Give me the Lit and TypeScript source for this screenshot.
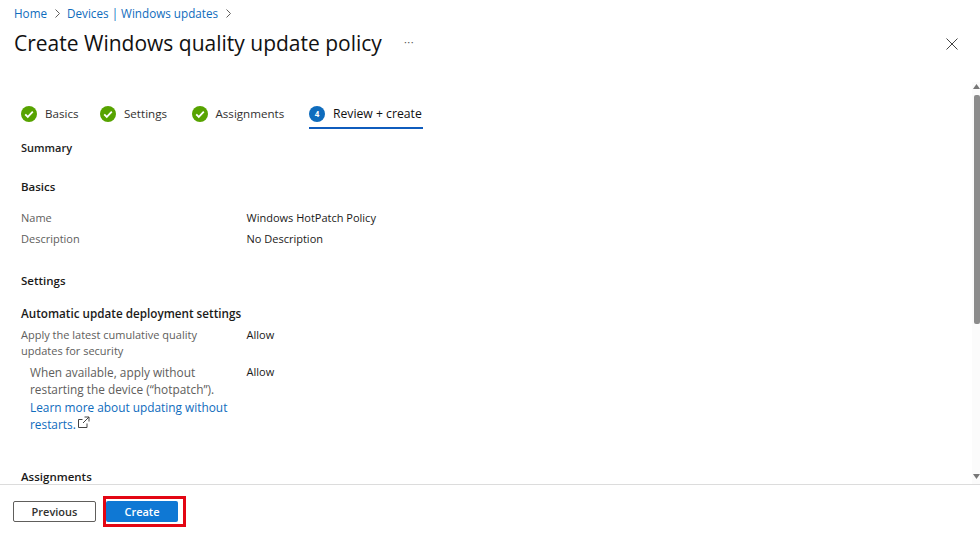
import { LitElement, html, css } from 'lit';
import { customElement } from 'lit/decorators.js';

const steps = [
	{ label: 'Basics', width: 79 },
	{ label: 'Settings', width: 91.5 },
	{ label: 'Assignments', width: 117.5 },
];

@customElement('app-root')
export class AppRoot extends LitElement {
	static styles = css`
		:host {
			display: flex;
			flex-direction: column;
			width: 980px;
			height: 535px;
			overflow: hidden;
			background: #fff;
			color: #1b1a19;
			font-family: "Open Sans", "Noto Sans", sans-serif;
			font-size: 11px;
		}
		a { color: #0f6cbd; text-decoration: none; }
		.header {
			position: relative;
			height: 82px;
			flex: none;
			padding: 5px 14px 0;
			box-sizing: border-box;
		}
		.crumbs {
			display: flex;
			align-items: center;
			gap: 6.5px;
			height: 16px;
			font-size: 11.7px;
		}
		.crumbs svg { width: 7px; height: 9px; }
		.title-row {
			display: flex;
			align-items: center;
			margin-top: 5px;
			height: 34px;
		}
		h1 {
			margin: 0;
			font-size: 21px;
			font-weight: 500;
			color: #111;
		}
		.more {
			margin-left: 22px;
			color: #555;
			font-size: 11px;
			letter-spacing: 0.5px;
			line-height: 1;
			padding-bottom: 3px;
		}
		.close {
			position: absolute;
			top: 38px;
			right: 22px;
			width: 12px;
			height: 12px;
		}
		.main { flex: 1; display: flex; min-height: 0; }
		.content {
			flex: 1;
			padding: 19px 0 0 21px;
			overflow: hidden;
		}
		.tabs { display: flex; height: 28px; }
		.tab {
			display: flex;
			align-items: flex-start;
			gap: 8px;
			height: 28px;
			box-sizing: border-box;
			font-size: 11.6px;
			line-height: 26px;
			color: #323130;
		}
		.tab svg { width: 16px; height: 16px; margin-top: 5px; flex: none; }
		.tab.active {
			width: 114px;
			border-bottom: 2px solid #0f5cbd;
			color: #111;
			font-size: 12.2px;
		}
		.badge {
			width: 16px;
			height: 16px;
			margin-top: 5px;
			border-radius: 50%;
			background: #0f6cbd;
			color: #fff;
			font-size: 8px;
			font-weight: 700;
			line-height: 16px;
			text-align: center;
			flex: none;
		}
		.summary { margin-top: 11px; font-weight: 600; font-size: 11px; line-height: 16px; color: #222; }
		h2 {
			margin: 0;
			font-size: 11.5px;
			font-weight: 600;
			line-height: 16px;
			color: #1b1a19;
		}
		.sec-basics { margin-top: 23px; }
		.rows { margin-top: 15px; display: grid; grid-template-columns: 225.5px 1fr; row-gap: 5px; line-height: 16px; }
		.key { color: #605e5c; }
		.sec-settings { margin-top: 25.5px; }
		.sec-auto { margin-top: 16px; font-size: 11.7px; }
		.auto { margin-top: 6px; display: grid; grid-template-columns: 225.5px 1fr; line-height: 16px; }
		.auto .key { width: 190px; }
		.sub { margin-top: 5px; padding-left: 9px; width: 200px; font-size: 11.85px; line-height: 17.5px; color: #605e5c; }
		.sub-val { margin-top: 5px; line-height: 16px; }
		.ext { width: 13px; height: 13px; vertical-align: 0; margin-left: -2px; }
		.sec-assign { margin-top: 35px; }
		.scrollbar {
			width: 8px;
			flex: none;
			background: #fbfbfb;
			display: flex;
			flex-direction: column;
			align-items: flex-end;
			padding: 2px 0 5px;
			box-sizing: border-box;
		}
		.arrow { width: 7px; height: 5px; flex: none; }
		.thumb { width: 6.5px; height: 229px; margin-top: 6px; background: #8c8c8c; border-radius: 2px; }
		.spacer { flex: 1; }
		.footer {
			height: 51px;
			flex: none;
			border-top: 1px solid #dcdcdc;
			box-sizing: border-box;
			display: flex;
			align-items: center;
			padding: 3px 0 0 13px;
			gap: 7px;
		}
		button {
			font: inherit;
			font-size: 11px;
			font-weight: 600;
			height: 21px;
			border-radius: 2px;
			padding: 0;
		}
		.prev {
			width: 83px;
			background: #fff;
			border: 1px solid #605e5c;
			color: #323130;
		}
		.mark {
			border: 3px solid #e30613;
			padding: 2px 5px 2px 0;
			display: flex;
		}
		.create {
			width: 72px;
			background: #0f78d4;
			border: 0;
			color: #fff;
		}
	`;

	private _check() {
		return html`<svg viewBox="0 0 16 16">
			<circle cx="8" cy="8" r="8" fill="#57a300"></circle>
			<path d="M4.2 8.3l2.6 2.6 5-5.2" fill="none" stroke="#fff" stroke-width="1.8"></path>
		</svg>`;
	}

	render() {
		return html`
			<div class="header">
				<div class="crumbs">
					<a href="#">Home</a>
					<svg viewBox="0 0 7 9"><path d="M1.5 .5l4 4-4 4" fill="none" stroke="#605e5c"></path></svg>
					<a href="#">Devices | Windows updates</a>
					<svg viewBox="0 0 7 9"><path d="M1.5 .5l4 4-4 4" fill="none" stroke="#605e5c"></path></svg>
				</div>
				<div class="title-row">
					<h1>Create Windows quality update policy</h1>
					<span class="more">···</span>
				</div>
				<svg class="close" viewBox="0 0 12 12"><path d="M.5 .5l11 11M11.5 .5l-11 11" stroke="#444" fill="none"></path></svg>
			</div>
			<div class="main">
				<div class="content">
					<div class="tabs">
						${steps.map(s => html`<div class="tab" style="width:${s.width}px">${this._check()}<span>${s.label}</span></div>`)}
						<div class="tab active"><span class="badge">4</span><span>Review + create</span></div>
					</div>
					<div class="summary">Summary</div>
					<h2 class="sec-basics">Basics</h2>
					<div class="rows">
						<div class="key">Name</div><div>Windows HotPatch Policy</div>
						<div class="key">Description</div><div>No Description</div>
					</div>
					<h2 class="sec-settings">Settings</h2>
					<h2 class="sec-auto">Automatic update deployment settings</h2>
					<div class="auto">
						<div class="key">Apply the latest cumulative quality updates for security</div>
						<div>Allow</div>
						<div class="sub">When available, apply without restarting the device (“hotpatch”).
							<a href="#">Learn more about updating without restarts.</a>
							<svg class="ext" viewBox="0 0 13 13"><path d="M10 7.5V11.5H1.5V3.5H5.5M7.5 1H12V5.5M12 1L6 7" fill="none" stroke="#444"></path></svg>
						</div>
						<div class="sub-val">Allow</div>
					</div>
					<h2 class="sec-assign">Assignments</h2>
				</div>
				<div class="scrollbar">
					<svg class="arrow" viewBox="0 0 7 5"><path d="M3.5 0L7 5H0z" fill="#777"></path></svg>
					<div class="thumb"></div>
					<div class="spacer"></div>
					<svg class="arrow" viewBox="0 0 7 5"><path d="M0 0H7L3.5 5z" fill="#777"></path></svg>
				</div>
			</div>
			<div class="footer">
				<button class="prev">Previous</button>
				<div class="mark"><button class="create">Create</button></div>
			</div>
		`;
	}
}
